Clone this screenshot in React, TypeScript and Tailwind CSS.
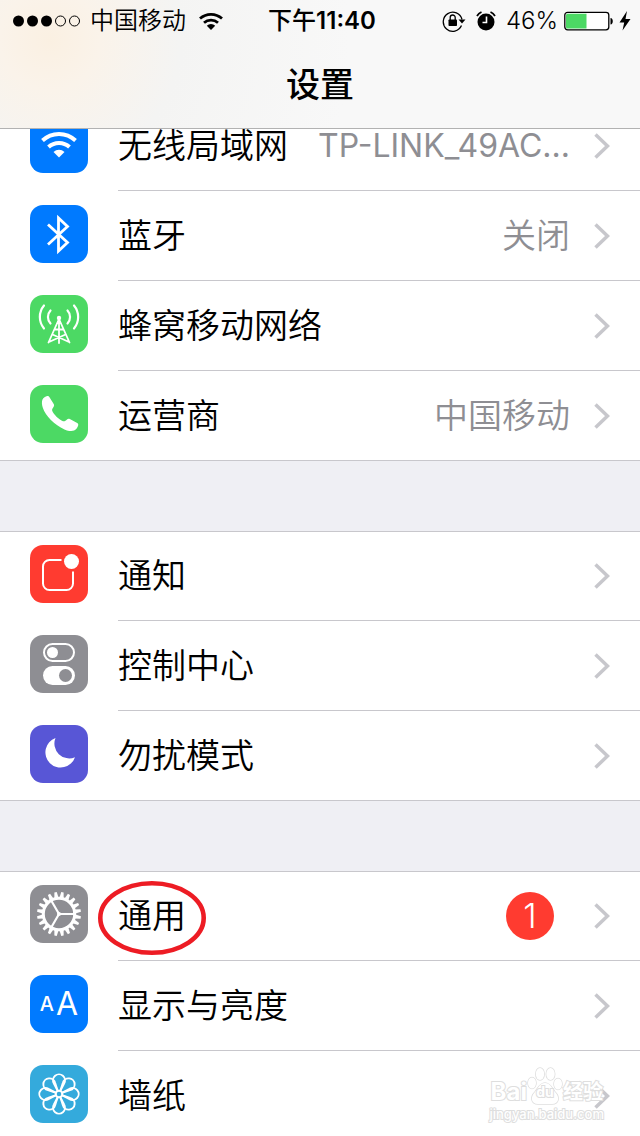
import React from 'react';

const FONT = "font-['Inter','Noto_Sans_CJK_SC',sans-serif]";

const WifiGlyph = () => (
    <svg viewBox="0 0 58 58" className="size-full" fill="none" stroke="#fff" strokeWidth="4">
        <path d="M12.5 25.5a24 24 0 0 1 33 0" />
        <path d="M18.5 32a15.5 15.5 0 0 1 21 0" />
        <path d="M29 42.5l-5.5-5.5a8 8 0 0 1 11 0z" fill="#fff" stroke="none" />
    </svg>
);

const BluetoothGlyph = () => (
    <svg viewBox="0 0 58 58" className="size-full" fill="none" stroke="#fff" strokeWidth="2.8">
        <path d="M18 19.5L37.5 37.5L28.5 46V13L37.5 21.5L18 39.5" />
    </svg>
);

const CellularGlyph = () => (
    <svg viewBox="0 0 58 58" className="size-full" fill="none" stroke="#fff" strokeWidth="1.8" strokeLinecap="round">
        <circle cx="29" cy="23" r="2.2" fill="#fff" stroke="none" />
        <path d="M29 23v25M29 24L18.5 47.5M29 24l10.5 23.5M25 34.5h8M22.5 39.5L39 47M35.5 39.5L19 47" />
        <path d="M20.5 15.5a9.5 9.5 0 0 0 0 13M37.5 15.5a9.5 9.5 0 0 1 0 13" strokeWidth="2.2" />
        <path d="M14 10.5a18 18 0 0 0 0 23M44 10.5a18 18 0 0 1 0 23" strokeWidth="2.2" />
    </svg>
);

const PhoneGlyph = () => (
    <svg viewBox="0 0 58 58" className="size-full" fill="#fff">
        <path d="M12.5 14.5c.8-1.500 3-3.300 4.700-3.500c1-.1 1.800.4 2.300 1.200l4.200 6.800c.6 1 .5 2-.2 2.900c-1 1.300-1.700 2.500-1.300 3.800c1.300 3.600 7.200 9.300 10.800 10.500c1.500.5 2.700-.5 4-1.700c.9-.8 1.800-.9 2.800-.4l7.400 4c1 .6 1.300 1.500.9 2.600c-.7 2-2.300 4.200-4 4.900c-2.600 1-6.200.4-9.600-1.100C24.500 40 15.500 30.500 12.900 23c-1-3-1.400-6.500-.4-8.500z" />
    </svg>
);

const NotificationGlyph = () => (
    <svg viewBox="0 0 58 58" className="size-full" fill="none" stroke="#fff" strokeWidth="2">
        <path d="M31.5 15H19.5a6.5 6.5 0 0 0-6.5 6.5v17a6.5 6.5 0 0 0 6.5 6.5h17a6.5 6.5 0 0 0 6.5-6.5V26.5" />
        <circle cx="41.5" cy="16.5" r="7.5" fill="#fff" stroke="none" />
    </svg>
);

const ControlGlyph = () => (
    <svg viewBox="0 0 58 58" className="size-full">
        <rect x="14" y="9" width="30" height="17" rx="8.5" fill="none" stroke="#fff" strokeWidth="2" />
        <circle cx="22.5" cy="17.5" r="5.5" fill="#fff" />
        <rect x="13" y="31" width="32" height="19" rx="9.5" fill="#fff" />
        <circle cx="35.5" cy="40.5" r="6.5" fill="#8e8e93" />
    </svg>
);

const MoonGlyph = () => (
    <svg viewBox="0 0 58 58" className="size-full" fill="#fff">
        <path d="M25.5 13A15.2 15.2 0 1 0 45 32.2A14.8 14.8 0 0 1 25.5 13z" />
    </svg>
);

const GearGlyph = () => (
    <svg viewBox="0 0 58 58" className="size-full" stroke="#fff" fill="none">
        {[...Array(20)].map((_, i) => (
            <path key={i} d="M26.8 13.5l1-6.5h2.4l1 6.5z" fill="#fff" stroke="none" transform={`rotate(${i * 18 + 9} 29 29)`} />
        ))}
        <circle cx="29" cy="29" r="15.7" strokeWidth="3" />
        <path d="M29 29H44M29 29L21.5 16M29 29L21.5 42" strokeWidth="2.2" />
        <circle cx="29" cy="29" r="2" fill="#fff" stroke="none" />
    </svg>
);

const DisplayGlyph = () => (
    <span className="flex size-full items-center justify-center gap-0.5 leading-none text-white">
        <span className="text-xl font-medium">A</span>
        <span className="text-[32px]">A</span>
    </span>
);

const WallpaperGlyph = () => (
    <svg viewBox="0 0 58 58" className="size-full" fill="none" stroke="#fff" strokeWidth="1.9">
        <circle cx="29" cy="29" r="3.2" />
        {[...Array(8)].map((_, i) => (
            <path key={i} d="M27.8 26L23.9 18.5A6 6 0 1 1 34.1 18.5L30.2 26" transform={`rotate(${i * 45} 29 29)`} />
        ))}
    </svg>
);

const Chevron = () => (
    <svg viewBox="0 0 16 26" className="ml-6 h-[26px] w-4 shrink-0" fill="none" stroke="#c7c7cc" strokeWidth="3.5">
        <path d="M1.5 1.5L13.5 13L1.5 24.5" />
    </svg>
);

type Item = {
    label: string;
    value?: string;
    latin?: boolean;
    badge?: number;
    circled?: boolean;
    tile: string;
    glyph: React.ReactNode;
};

const groups: Item[][] = [
    [
        { label: '无线局域网', value: 'TP-LINK_49AC...', latin: true, tile: 'bg-[#007aff]', glyph: <WifiGlyph /> },
        { label: '蓝牙', value: '关闭', tile: 'bg-[#007aff]', glyph: <BluetoothGlyph /> },
        { label: '蜂窝移动网络', tile: 'bg-[#4cd964]', glyph: <CellularGlyph /> },
        { label: '运营商', value: '中国移动', tile: 'bg-[#4cd964]', glyph: <PhoneGlyph /> },
    ],
    [
        { label: '通知', tile: 'bg-[#ff3b30]', glyph: <NotificationGlyph /> },
        { label: '控制中心', tile: 'bg-[#8e8e93]', glyph: <ControlGlyph /> },
        { label: '勿扰模式', tile: 'bg-[#5856d6]', glyph: <MoonGlyph /> },
    ],
    [
        { label: '通用', badge: 1, circled: true, tile: 'bg-[#8e8e93]', glyph: <GearGlyph /> },
        { label: '显示与亮度', tile: 'bg-[#007aff]', glyph: <DisplayGlyph /> },
        { label: '墙纸', tile: 'bg-[#34aadc]', glyph: <WallpaperGlyph /> },
    ],
];

const Row = ({ item, last }: { item: Item; last: boolean }) => (
    <li className={last ? 'border-b border-[#c8c7cc]' : ''}>
        <a href="#" className={`flex pl-[30px] ${last ? 'h-[89px]' : 'h-[90px]'}`}>
            <span className={`mt-3.5 size-[58px] shrink-0 overflow-hidden rounded-[13px] ${item.tile}`}>{item.glyph}</span>
            <span className={`relative ml-[30px] flex min-w-0 flex-1 items-center pr-[30px] text-[34px] font-[350] ${last ? '' : 'border-b border-[#c8c7cc]'}`}>
                <span className="shrink-0 text-black">{item.label}</span>
                {item.circled && (
                    <svg viewBox="0 0 108 74" className="absolute top-2.5 -left-5 h-[74px] w-[108px]" fill="none" stroke="#ed1c24" strokeWidth="4.6">
                        <ellipse cx="54" cy="37" rx="51.7" ry="34.7" />
                    </svg>
                )}
                <span className="flex min-w-0 flex-1 items-center justify-end">
                    {item.value && (
                        <span className={`whitespace-nowrap text-[#8e8e93] ${item.latin ? 'text-[32px] font-normal' : ''}`}>{item.value}</span>
                    )}
                    {item.badge && (
                        <span className="mr-4 flex size-12 items-center justify-center rounded-full bg-[#ff3b30] text-white">{item.badge}</span>
                    )}
                    <Chevron />
                </span>
            </span>
        </a>
    </li>
);

const StatusBar = () => (
    <div className="grid h-[42px] grid-cols-[1fr_auto_1fr] items-center pr-2 pl-3 text-2xl">
        <div className="flex items-center gap-2">
            <svg viewBox="0 0 70 12" className="h-3 w-[70px]">
                {[0, 1, 2].map((i) => <circle key={i} cx={6.5 + i * 14} cy="6" r="5.5" />)}
                {[3, 4].map((i) => <circle key={i} cx={6.5 + i * 14} cy="6" r="5" fill="none" stroke="#000" />)}
            </svg>
            <span className="font-[350]">中国移动</span>
            <svg viewBox="0 0 26 20" className="ml-1 h-5 w-[26px]" fill="none" stroke="#000" strokeWidth="2.8">
                <path d="M2 7.5a16.5 16.5 0 0 1 22 0" />
                <path d="M6 11.8a10.5 10.5 0 0 1 14 0" />
                <path d="M13 19l-4.2-4.2a6 6 0 0 1 8.4 0z" fill="#000" stroke="none" />
            </svg>
        </div>
        <span><span className="font-medium">下午</span><span className="font-semibold">11:40</span></span>
        <div className="flex items-center justify-end">
            <svg viewBox="0 0 24 22" className="mr-2.5 h-[22px] w-6" fill="none" stroke="#000">
                <path d="M19.5 15.5A9.5 9.5 0 1 1 20 9.5" strokeWidth="1.3" />
                <path d="M16.5 9.5h7l-3.5 4z" fill="#000" stroke="none" />
                <rect x="6.5" y="9.5" width="8.5" height="6.5" rx=".8" fill="#000" stroke="none" />
                <path d="M8.2 10V7.500a2.5 2.5 0 0 1 5 0V10" strokeWidth="1.3" />
            </svg>
            <svg viewBox="0 0 20 20" className="mr-2.5 size-5">
                <circle cx="10" cy="11" r="8.5" />
                <path d="M1 5a10 10 0 0 1 4.5-4M19 5a10 10 0 0 0-4.5-4" fill="none" stroke="#000" strokeWidth="1.8" />
                <path d="M10.5 5.5v6H6.5" fill="none" stroke="#fff" strokeWidth="1.6" />
            </svg>
            <span className="font-[350]">46%</span>
            <svg viewBox="0 0 50 20" className="ml-1.5 h-5 w-[50px]">
                <rect x=".8" y="1.3" width="44" height="17.6" rx="2.8" fill="#fff" stroke="#000" strokeWidth="1.3" />
                <path d="M3.5 2.8h19v14.6h-19a1.5 1.5 0 0 1-1.5-1.5V4.3a1.5 1.5 0 0 1 1.5-1.5z" fill="#4cd964" />
                <path d="M46.5 7c3 .3 3 6.2 0 6.5z" />
            </svg>
            <svg viewBox="0 0 14 20" className="ml-1 h-5 w-3.5">
                <path d="M9 0L1.5 11.5h4.7L4.5 19.5L12.5 8H7.5z" />
            </svg>
        </div>
    </div>
);

const Watermark = () => (
    <div className="absolute right-9 bottom-3.5 text-white [paint-order:stroke] [-webkit-text-stroke:2px_#dedede]">
        <div className="flex h-10 items-end justify-center font-bold">
            <span className="text-2xl leading-7">Bai</span>
            <span className="relative h-10 w-9">
                <svg viewBox="0 0 36 40" className="size-full" fill="#fff" stroke="#dedede" strokeWidth="1.5">
                    <ellipse cx="5" cy="17" rx="4" ry="5.5" />
                    <ellipse cx="13" cy="8" rx="4.2" ry="6" />
                    <ellipse cx="23.5" cy="8" rx="4.2" ry="6" />
                    <ellipse cx="31" cy="18" rx="4" ry="5.5" />
                    <path d="M18 17c5 0 7 5 10 9c5 5 4 12-3 12H11c-7 0-8-7-3-12c3-4 5-9 10-9z" />
                </svg>
                <span className="absolute inset-x-0 bottom-1 text-center text-sm leading-5">du</span>
            </span>
            <span className="text-xl leading-7">经验</span>
        </div>
        <div className="text-center text-[13px] leading-4 font-medium">jingyan.baidu.com</div>
    </div>
);

export default function App() {
    return (
        <div className={`relative h-screen overflow-hidden bg-[#efeff4] text-black ${FONT}`}>
            <header className="relative z-10 h-[129px] border-b border-[#b2b2b2] bg-[#f8f8f8] bg-[radial-gradient(circle_at_50px_40px,#faf0e2_0,#faf3ea_50px,#f4f4f3_130px,#f8f8f8_300px)]">
                <StatusBar />
                <h1 className="pt-[18px] text-center text-[34px] leading-[50px] font-medium">设置</h1>
            </header>
            <main className="-mt-7 flex flex-col gap-[70px]">
                {groups.map((items, g) => (
                    <ul key={g} className="bg-white shadow-[inset_0_1px_0_#c8c7cc]">
                        {items.map((item, i) => (
                            <Row key={item.label} item={item} last={i === items.length - 1} />
                        ))}
                    </ul>
                ))}
            </main>
            <Watermark />
        </div>
    );
}
